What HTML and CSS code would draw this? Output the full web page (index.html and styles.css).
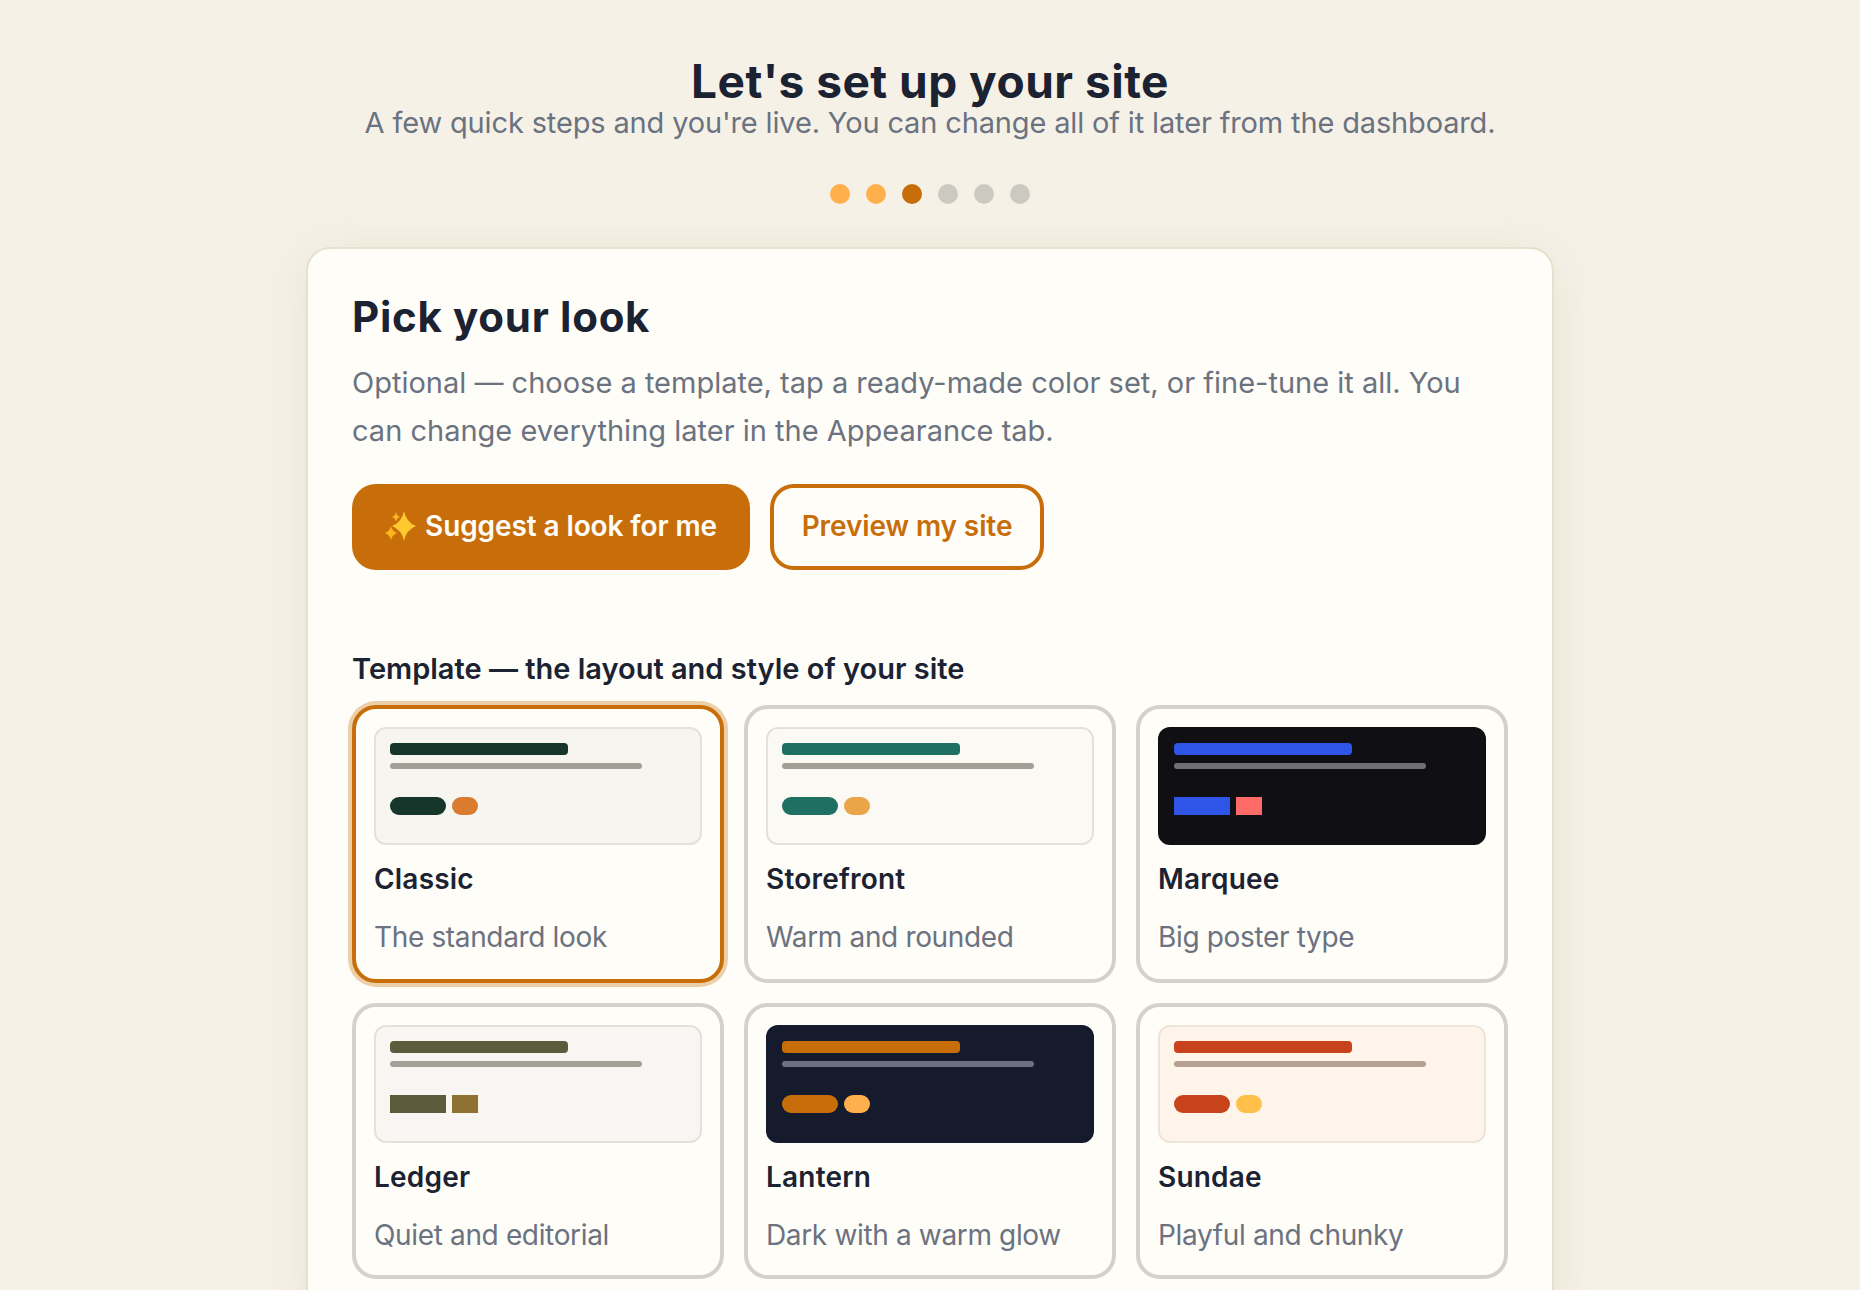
FILE: index.html
```html
<!DOCTYPE html>
<html lang="en">
<head>
	<meta charset="UTF-8">
	<title>Let's set up your site</title>
	<link rel="stylesheet" href="styles.css">
</head>
<body>
	<div class="page">
		<header class="intro">
			<h1>Let's set up your site</h1>
			<p>A few quick steps and you're live. You can change all of it later from the dashboard.</p>
		</header>
		<ul class="steps">
			<li class="done"></li>
			<li class="done"></li>
			<li class="current"></li>
			<li></li>
			<li></li>
			<li></li>
		</ul>
		<section class="panel">
			<h2>Pick your look</h2>
			<p class="lead">Optional — choose a template, tap a ready-made color set, or fine-tune it all. You can change everything later in the Appearance tab.</p>
			<div class="actions">
				<button class="btn btn-solid">
					<svg class="sparkles" viewBox="0 0 32 32" width="32" height="32">
						<path fill="#fdc92f" d="M19 1Q21 12 31 16Q21 20 19 31Q17 20 7 16Q17 12 19 1Z"/>
						<path fill="#fbb41f" d="M6 16Q7 21 12 23Q7 25 6 30Q5 25 0 23Q5 21 6 16Z"/>
						<path fill="#fbb41f" d="M11 2Q11.700 6 15 7Q11.700 8 11 12Q10.300 8 7 7Q10.300 6 11 2Z"/>
					</svg>
					Suggest a look for me
				</button>
				<button class="btn btn-outline">Preview my site</button>
			</div>
			<h3>Template — the layout and style of your site</h3>
			<div class="templates">
				<div class="tpl selected">
					<div class="thumb classic"><i class="bar"></i><i class="line"></i><div class="chips"><i class="chip"></i><i class="chip alt"></i></div></div>
					<b>Classic</b>
					<span>The standard look</span>
				</div>
				<div class="tpl">
					<div class="thumb storefront"><i class="bar"></i><i class="line"></i><div class="chips"><i class="chip"></i><i class="chip alt"></i></div></div>
					<b>Storefront</b>
					<span>Warm and rounded</span>
				</div>
				<div class="tpl">
					<div class="thumb marquee square"><i class="bar"></i><i class="line"></i><div class="chips"><i class="chip"></i><i class="chip alt"></i></div></div>
					<b>Marquee</b>
					<span>Big poster type</span>
				</div>
				<div class="tpl">
					<div class="thumb ledger square"><i class="bar"></i><i class="line"></i><div class="chips"><i class="chip"></i><i class="chip alt"></i></div></div>
					<b>Ledger</b>
					<span>Quiet and editorial</span>
				</div>
				<div class="tpl">
					<div class="thumb lantern"><i class="bar"></i><i class="line"></i><div class="chips"><i class="chip"></i><i class="chip alt"></i></div></div>
					<b>Lantern</b>
					<span>Dark with a warm glow</span>
				</div>
				<div class="tpl">
					<div class="thumb sundae"><i class="bar"></i><i class="line"></i><div class="chips"><i class="chip"></i><i class="chip alt"></i></div></div>
					<b>Sundae</b>
					<span>Playful and chunky</span>
				</div>
			</div>
		</section>
	</div>
</body>
</html>
```

FILE: styles.css
```css
*{margin: 0; padding: 0; box-sizing: border-box;}
ul, li{list-style: none;}
html, body{height: 100%; overflow: hidden;}
body{background: #f6f1e7; color: #1b2232; font-family: "Inter", "Liberation Sans", sans-serif;}

.page{display: flex; flex-direction: column; align-items: center; padding-top: 52px;}

.intro{text-align: center;}
.intro h1{font-size: 46px; line-height: 58px; font-weight: 700; letter-spacing: 0.5px;}
.intro p{font-size: 29px; line-height: 26px; color: #6b7280; letter-spacing: -0.15px;}

.steps{display: flex; gap: 16px; margin-top: 48px;}
.steps li{width: 20px; height: 20px; border-radius: 50%; background: #ccc9c0;}
.steps .done{background: #ffb04c;}
.steps .current{background: #c76e0a;}

.panel{width: 1248px; margin-top: 43px; padding: 44px; background: #fffdf8; border: 2px solid #e5e1cf; border-radius: 24px; box-shadow: 0 8px 48px rgba(120, 100, 60, 0.10);}
.panel h2{font-size: 42px; line-height: 48px; font-weight: 700; letter-spacing: 0.7px;}
.lead{margin-top: 18px; font-size: 29px; line-height: 48px; color: #6b7280;}

.actions{display: flex; gap: 20px; margin-top: 29px;}
.btn{display: inline-flex; align-items: center; justify-content: center; height: 86px; padding-bottom: 2px; border-radius: 24px; font-family: inherit; font-size: 28px; font-weight: 600; letter-spacing: -0.1px;}
.btn-solid{width: 398px; gap: 8px; background: #c76e0a; color: #fffdf8; border: 0;}
.btn-outline{width: 274px; background: #fffdf8; color: #c76e0a; border: 4px solid #c76e0a;}

.panel h3{margin-top: 81px; font-size: 29px; line-height: 36px; font-weight: 600;}

.templates{display: grid; grid-template-columns: repeat(3, 1fr); grid-template-rows: 278px 276px; gap: 20px; margin-top: 18px;}
.tpl{display: flex; flex-direction: column; padding: 18px; background: #fffdf8; border: 4px solid #d3d1c9; border-radius: 24px;}
.tpl.selected{border-color: #c76e0a; box-shadow: 0 0 0 4px #eccfa8;}
.tpl b{margin-top: 17px; font-size: 28px; line-height: 34px; font-weight: 600; letter-spacing: 0.2px;}
.tpl span{margin-top: 21px; font-size: 28px; line-height: 40px; color: #6b7280; letter-spacing: -0.35px;}

.thumb{display: flex; flex-direction: column; flex: none; height: 118px; padding: 14px; border: 2px solid #e3e1da; border-radius: 12px; background: #f6f5f0;}
.thumb i{display: block;}
.bar{width: 60%; height: 12px; border-radius: 4px;}
.line{width: 85%; height: 6px; margin-top: 8px; border-radius: 3px; background: #a19f96;}
.chips{display: flex; gap: 6px; margin-top: 28px;}
.chip{width: 56px; height: 18px; border-radius: 9px;}
.chip.alt{width: 26px;}
.square .chip{border-radius: 0;}

.classic .bar, .classic .chip{background: #16352b;}
.classic .alt{background: #d97c30;}
.storefront{background: #fbf9f3;}
.storefront .bar, .storefront .chip{background: #1f6f62;}
.storefront .alt{background: #e9a548;}
.marquee{background: #101014; border-color: #101014;}
.marquee .bar, .marquee .chip{background: #2f55e8;}
.marquee .alt{background: #ff6b66;}
.marquee .line{background: #6f6f74;}
.ledger{background: #f7f6f3;}
.ledger .bar, .ledger .chip{background: #5c5b3b;}
.ledger .alt{background: #8f7132;}
.lantern{background: #151a2c; border-color: #151a2c;}
.lantern .bar, .lantern .chip{background: #c76e0a;}
.lantern .alt{background: #ffb04c;}
.lantern .line{background: #6b7080;}
.sundae{background: #fff4ea; border-color: #efe4d8;}
.sundae .bar, .sundae .chip{background: #c8431c;}
.sundae .alt{background: #ffc04a;}
.sundae .line{background: #b7a193;}
```
